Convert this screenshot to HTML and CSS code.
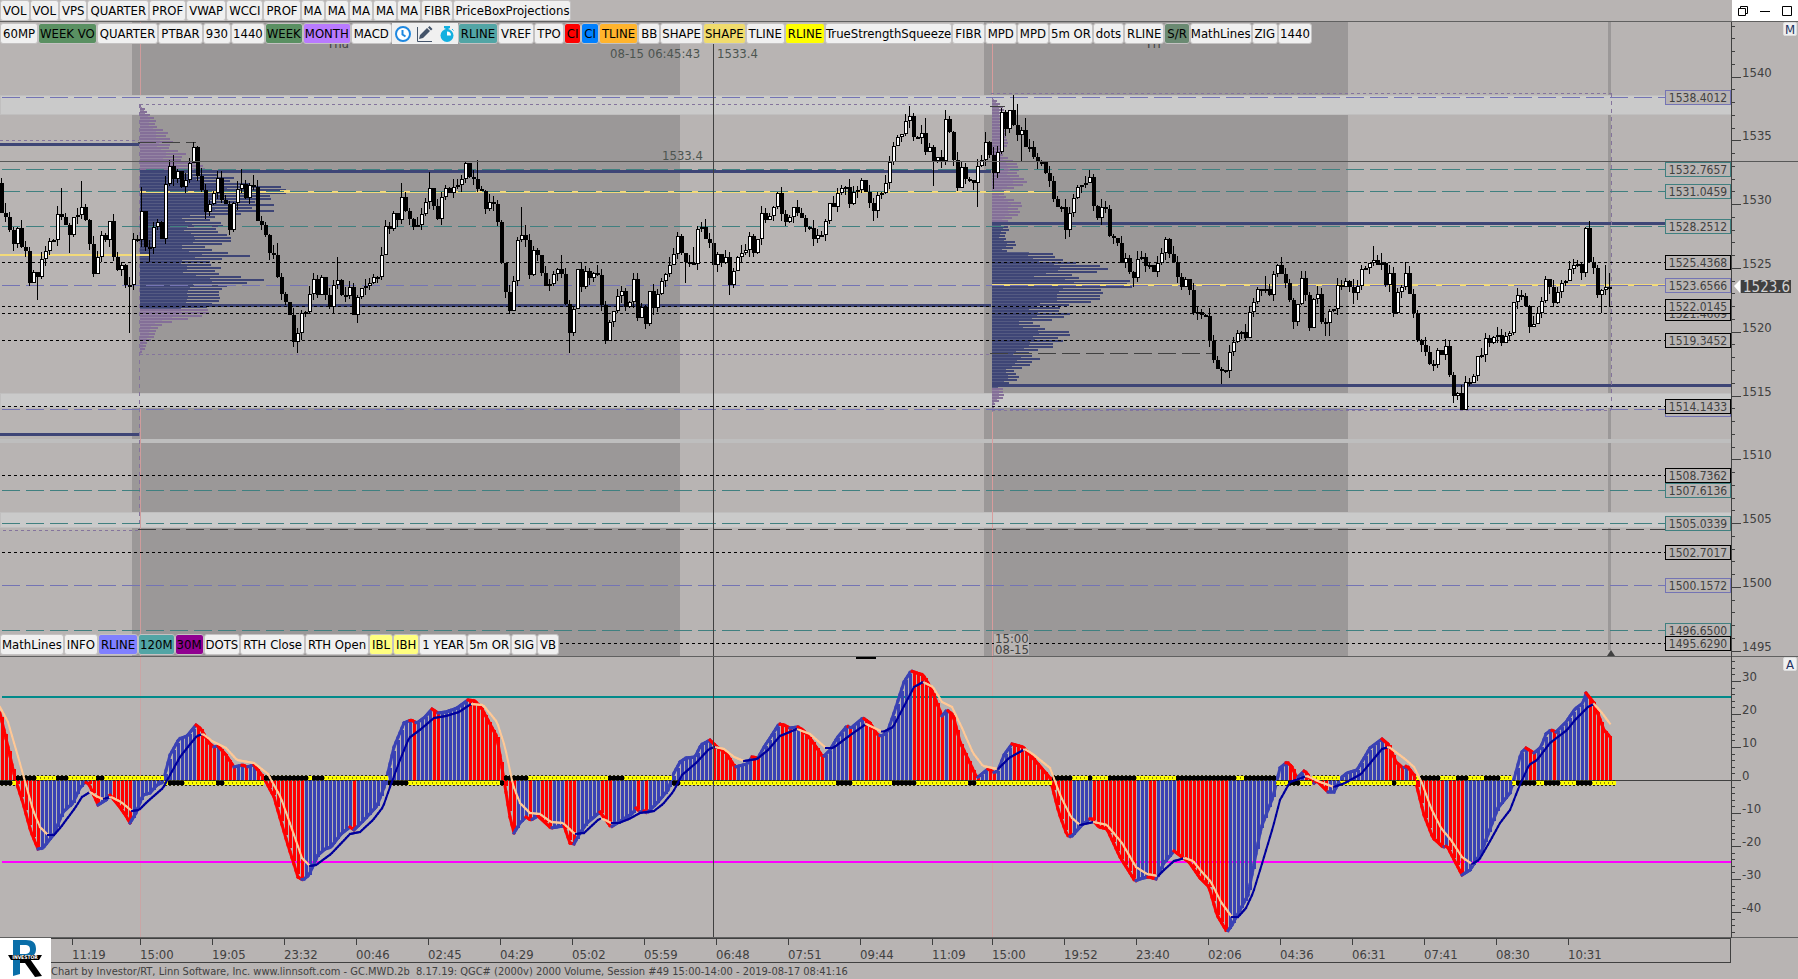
FILE: index.html
```
<!DOCTYPE html>
<html lang="en">
  <head>
    <meta charset="UTF-8" />
    <meta name="viewport" content="width=device-width, initial-scale=1.0" />
    <title>GC.MWD.2b - Investor/RT</title>
    <link rel="stylesheet" href="styles.css">
  </head>
  <body>
    <!-- Top toolbar -->
    <header class="topbar">
      <div class="toolbar">
        <button>VOL</button><button>VOL</button><button>VPS</button><button>QUARTER</button><button>PROF</button><button>VWAP</button><button>WCCI</button><button>PROF</button><button>MA</button><button>MA</button><button>MA</button><button>MA</button><button>MA</button><button>FIBR</button><button class="snug">PriceBoxProjections</button>
      </div>
      <div class="window-controls">
        <button aria-label="Restore">
          <svg width="12" height="12"><path d="M3.5 3V1.5h7v7H9M1.5 3.5h7v7h-7z" /></svg>
        </button>
        <button aria-label="Minimize">
          <svg width="12" height="12"><path d="M1 6.5h10" /></svg>
        </button>
        <button aria-label="Maximize">
          <svg width="12" height="12"><path d="M1.5 1.5h9v9h-9z" /></svg>
        </button>
      </div>
    </header>

    <!-- Price chart -->
    <main class="panel">
      <div class="toolbar overlay-top">
        <button>60MP</button><button class="green snug">WEEK VO</button><button>QUARTER</button><button>PTBAR</button><button>930</button><button class="snug">1440</button><button class="green snug">WEEK</button><button class="violet snug">MONTH</button><button>MACD</button>
        <button class="icon" aria-label="Clock">
          <svg width="16" height="16"><circle cx="8" cy="8" r="7" fill="#fff" stroke="#1e88e0" stroke-width="2" /><path d="M7.5 4v4.500l3 2" fill="none" stroke="#1e88e0" stroke-width="2" /></svg>
        </button>
        <button class="icon" aria-label="Draw">
          <svg width="16" height="16"><path d="M.5 1v14.500H15" fill="none" stroke="#44546a" /><path d="M2 13l1-4 7-7 3 3-7 7zM11 1.500l1.500-1.500 3 3L14 4.500z" fill="#44546a" /></svg>
        </button>
        <button class="icon" aria-label="Timer">
          <svg width="16" height="16"><circle cx="8" cy="9.500" r="6.500" fill="#12b0e0" /><path d="M5.500 0h5v2h-5zM7 1h2v3H7zM13 3l1.500 1.500" fill="#12b0e0" stroke="#12b0e0" /><path d="M8 9.500V5.500a4 4 0 0 1 4 4z" fill="#fff" /></svg>
        </button>
        <button class="teal">RLINE</button><button>VREF</button><button>TPO</button><button class="red">CI</button><button class="blue">CI</button><button class="orange">TLINE</button><button>BB</button><button class="snug">SHAPE</button><button class="sand snug">SHAPE</button><button>TLINE</button><button class="yellow">RLINE</button><button class="tight">TrueStrengthSqueeze</button><button>FIBR</button><button>MPD</button><button>MPD</button><button class="snug">5m OR</button><button>dots</button><button>RLINE</button><button class="moss">S/R</button><button class="tight">MathLines</button><button>ZIG</button><button class="snug">1440</button>
      </div>
      <svg id="priceChart" class="price-chart"></svg>
      <div class="toolbar overlay-bottom">
        <button class="snug">MathLines</button><button>INFO</button><button class="periwinkle">RLINE</button><button class="teal snug">120M</button><button class="purple snug">30M</button><button class="snug">DOTS</button><button>RTH Close</button><button>RTH Open</button><button class="lemon">IBL</button><button class="lemon">IBH</button><button>1 YEAR</button><button class="snug">5m OR</button><button>SIG</button><button>VB</button>
      </div>
    </main>
    <aside class="scale">
      <button class="mode">M</button>
      <svg id="priceScale" class="price-chart"></svg>
    </aside>

    <!-- True strength oscillator -->
    <section class="panel">
      <svg id="oscChart" class="osc-chart"></svg>
    </section>
    <aside class="scale">
      <button class="mode">A</button>
      <svg id="oscScale" class="osc-chart"></svg>
    </aside>

    <!-- Time axis and status line -->
    <footer class="bottom">
      <div class="logo">
        <svg width="51" height="40" viewBox="0 0 51 40">
          <path d="M13 2h13c7 0 10 3 10 9 0 5-3 8-7 9H20v16l-7 2zM20 7v9h5c3 0 5-1 5-4.500S28 7 25 7z" fill="#0a6ea8" fill-rule="evenodd" />
          <path d="M20 21h10l12 17-7 1L25 25h-5z" fill="#000" />
          <path d="M8 17h34l-3 5H11z" fill="#000" />
          <text x="25" y="21" class="logo-text">INVESTOR</text>
        </svg>
      </div>
      <svg id="timeAxis" class="time-axis"></svg>
      <p class="status">Chart by Investor/RT, Linn Software, Inc. www.linnsoft.com - GC.MWD.2b&nbsp; 8.17.19: QGC# (2000v) 2000 Volume, Session #49 15:00-14:00 - 2019-08-17 08:41:16</p>
    </footer>

    <script src="script.js"></script>
  </body>
</html>
```
FILE: styles.css
```
* {
  box-sizing: border-box;
}
body {
  margin: 0;
  min-height: 100vh;
  background: #b8b4b3;
  color: #404040;
  font-family: "DejaVu Sans Condensed", "DejaVu Sans", sans-serif;
  font-size: 13px;
  display: grid;
  grid-template-columns: 1fr 67px;
  grid-template-rows: auto auto auto 1fr;
}
button {
  font: inherit;
  color: #000;
  margin: 0;
  cursor: pointer;
}
svg {
  display: block;
}

/* toolbars */
.topbar {
  grid-column: 1 / -1;
  display: flex;
  justify-content: space-between;
  height: 22px;
  border-bottom: 1px solid #606060;
}
.toolbar {
  display: flex;
}
.toolbar button {
  height: 21px;
  padding: 0 2px;
  border: 1px solid #c4c2c2;
  border-radius: 3px;
  background: #f0f0f0;
  line-height: 18px;
  white-space: nowrap;
}
.toolbar .snug {
  padding: 0 1px;
}
.toolbar .tight {
  padding: 0;
}
.toolbar .icon {
  width: 22px;
  padding: 0 2px;
  border-color: #f0f0f0;
  border-radius: 0;
}
.toolbar .green { background: #5a9062; }
.toolbar .violet { background: #b97aff; }
.toolbar .teal { background: #52a5a5; }
.toolbar .red { background: #ff0000; }
.toolbar .blue { background: #0080ff; }
.toolbar .orange { background: #ffb42d; }
.toolbar .sand { background: #f0dc6c; }
.toolbar .yellow { background: #ffff00; }
.toolbar .moss { background: #6a8a72; }
.toolbar .periwinkle { background: #8080ff; }
.toolbar .purple { background: #900090; }
.toolbar .lemon { background: #ffff80; }
.window-controls {
  display: flex;
  width: 66px;
  height: 21px;
  background: #fff;
}
.window-controls button {
  flex: 1;
  padding: 0 5px;
  border: 0;
  background: none;
}
.window-controls path {
  fill: none;
  stroke: #000;
}

/* chart panels */
.panel {
  position: relative;
  min-width: 0;
}
.overlay-top {
  position: absolute;
  top: 1px;
  left: 0;
}
.overlay-bottom {
  position: absolute;
  bottom: 2px;
  left: 0;
}
.price-chart,
.osc-chart {
  width: 100%;
  height: 635px;
  border-bottom: 1px solid #606060;
}
.osc-chart {
  height: 281px;
}
.scale {
  position: relative;
  border-left: 1px solid #404040;
}
.mode {
  position: absolute;
  top: 0;
  right: 1px;
  width: 14px;
  height: 14px;
  padding: 0;
  border: 1px solid #dcdcdc;
  border-radius: 2px;
  background: #f0f0f0;
  line-height: 11px;
  color: #203060;
}

/* bottom */
.bottom {
  grid-column: 1 / -1;
  display: grid;
  grid-template-columns: 51px 1fr 67px;
  grid-template-rows: 25px 16px;
  align-content: start;
}
.logo {
  grid-row: 1 / 3;
  background: #fff;
}
.logo-text {
  font-size: 5px;
  font-weight: bold;
  text-anchor: middle;
}
.time-axis {
  width: 100%;
  height: 25px;
  border: solid #404040;
  border-width: 1px 1px 1px 0;
}
.status {
  grid-column: 2 / -1;
  margin: 0;
  padding-top: 1px;
  font-size: 11px;
  line-height: 16px;
  white-space: nowrap;
}

/* svg text */
svg text {
  fill: #404040;
}
.tag-text {
  font-size: 12px;
}
.last-price {
  font-size: 15px;
}
svg .logo-text {
  fill: #fff;
}
svg .last-price {
  fill: #d0d0d0;
}
svg .cursor-text {
  fill: #4c5450;
}
```
FILE: script.js
```
const NS = "http://www.w3.org/2000/svg";
const PRICE_TOP = 22;
const OSC_TOP = 657;
const BAR = 4;

function add(parent, tag, attrs, text) {
  const el = document.createElementNS(NS, tag);
  for (const key in attrs) el.setAttribute(key, attrs[key]);
  if (text !== undefined) el.textContent = text;
  parent.appendChild(el);
  return el;
}

// every chart group uses window coordinates
function layer(id, dx, dy) {
  return add(document.getElementById(id), "g", { transform: `translate(${dx},${dy})` });
}

function rect(g, x, y, w, h, fill) {
  return add(g, "rect", { x, y, width: w, height: h, fill });
}

function line(g, x1, y, x2, stroke, dash, width) {
  add(g, "line", {
    x1, x2, y1: y, y2: y, stroke,
    "stroke-width": width || 1,
    "stroke-dasharray": dash || "none",
    "shape-rendering": "crispEdges",
  });
}

function vline(g, x, y1, y2, stroke, dash) {
  add(g, "line", { x1: x + 0.5, x2: x + 0.5, y1, y2, stroke, "stroke-dasharray": dash || "none" });
}

const priceY = (p) => Math.round(76.6 + (1540 - p) * 12.756);

const levels = [
  [1538.4012, "blue"], [1532.7657, "teal"], [1531.0459, "teal"], [1528.2512, "teal"],
  [1525.4368, "black"], [1523.6566, "blue"], [1521.4609, "black"], [1522.0145, "black"],
  [1519.3452, "black"], [1513.93, "blue"], [1514.1433, "black"], [1508.7362, "black"],
  [1507.6136, "teal"], [1505.0339, "teal"], [1502.7017, "black"], [1500.1572, "blue"],
  [1496.65, "teal"], [1495.629, "black"],
];
const levelColor = { blue: "#7474b4", teal: "#408080", black: "#000" };

// closes, one per 2000v bar, in thirds of a pixel
const closes = [
  640, 652, 690, 732, 685, 740, 752, 848, 815, 832, 776, 752, 722, 720, 642, 652, 676, 704, 650, 645,
  622, 660, 732, 822, 770, 705, 720, 662, 772, 810, 795, 856, 856, 718, 720, 633, 742, 745, 680, 665,
  716, 552, 498, 536, 512, 562, 540, 488, 440, 528, 570, 636, 612, 578, 533, 600, 612, 690, 610, 568,
  552, 594, 556, 560, 662, 675, 705, 760, 764, 832, 882, 905, 945, 1026, 1000, 940, 935, 882, 838, 885,
  832, 885, 920, 855, 840, 885, 888, 862, 945, 892, 865, 858, 850, 832, 832, 766, 678, 688, 640, 660,
  592, 632, 656, 682, 675, 642, 606, 565, 618, 658, 592, 565, 580, 562, 556, 538, 488, 532, 536, 568,
  573, 626, 606, 612, 666, 790, 876, 932, 843, 720, 706, 720, 826, 750, 765, 818, 858, 852, 822, 806,
  822, 912, 1000, 928, 808, 862, 812, 835, 820, 826,
  915, 1024, 965, 932, 888, 873, 922, 905, 838, 955, 920, 972, 873, 925, 882, 843, 822, 795, 762, 708,
  758, 785, 790, 792, 688, 682, 716, 728, 795, 762, 790, 772, 855, 812, 772, 758, 750, 708, 760, 718,
  638, 660, 648, 620, 578, 642, 665, 652, 620, 640, 655, 680, 684, 716, 706, 706, 662, 610, 620, 578,
  565, 560, 612, 575, 570, 540, 575, 608, 632, 585, 578, 548, 485, 438, 412, 402, 362, 348, 412, 415,
  400, 455, 440, 482, 472, 484, 358, 395, 480, 564, 502, 538, 540, 548, 498, 480, 426, 465, 520, 455,
  336, 388, 330, 375, 405, 390, 440, 440, 470, 485, 487, 520, 542, 597, 622, 622, 690, 638, 595, 560,
  555, 550, 532, 618, 655, 622, 628, 708, 715, 730, 790, 775, 815, 833, 778, 772, 798, 796, 815, 790,
  760, 717, 762, 787, 830, 862, 838, 870, 940, 935,
  945, 948, 1024, 1080, 1108, 1110, 1112, 1056, 1025, 1000, 996, 1014, 935, 905, 866, 867, 868, 885,
  822, 795, 822, 850, 900, 965, 912, 835, 885, 983, 897, 882, 966, 968, 932, 928, 856, 860, 843, 862,
  880, 858, 808, 805, 790, 780, 795, 790, 856, 818, 940, 876, 862, 820, 883, 940, 1020, 1035, 1055,
  1092, 1094, 1050, 1066, 1038, 1125, 1188, 1178, 1229, 1147, 1150, 1128, 1068, 1064, 1015, 1028, 1010,
  1004, 1028, 1008, 1000, 905, 886, 888, 918, 980, 972, 940, 902, 838, 862, 910, 876, 850, 842, 808,
  796, 792, 818, 684, 787, 805, 884, 870, 860, 862,
];

// bars whose wick runs well past the body
const highs = {
  0: 535, 1: 610, 15: 565, 20: 543, 35: 560, 43: 465, 48: 427, 54: 512, 60: 508, 63: 525, 69: 730,
  84: 770, 100: 548, 107: 515, 119: 480, 130: 620, 131: 675, 140: 765, 158: 820, 169: 695, 173: 742,
  175: 665, 194: 575, 227: 318, 231: 355, 236: 330, 246: 395, 253: 285, 254: 312, 256: 355, 272: 510,
  291: 712, 316: 828, 326: 812, 343: 738, 345: 758, 351: 786, 386: 828, 396: 680, 401: 795, 402: 820,
};
const lows = {
  9: 900, 17: 758, 32: 1000, 37: 785, 74: 1058, 89: 970, 142: 1058, 171: 848, 182: 885, 218: 662,
  233: 557, 244: 620, 248: 566, 255: 483, 266: 716, 283: 862, 305: 1151, 331: 1007, 332: 1008,
  338: 912, 365: 1230, 366: 1230, 383: 982, 400: 940, 402: 922,
};

// volume profiles, [y in thirds of a pixel, right edge]
const profiles = [
  {
    x: 140, valueTop: 171, valueBottom: 306,
    rows: [
      [315, 140], [325, 145], [340, 149], [355, 156], [375, 155], [395, 168], [410, 165], [418, 174],
      [440, 168], [452, 180], [460, 187], [475, 178], [490, 201], [510, 207], [520, 214], [533, 238],
      [540, 230], [548, 245], [555, 279], [565, 285], [575, 289], [582, 268], [592, 275], [602, 253],
      [612, 274], [622, 249], [630, 274], [640, 237], [650, 209], [660, 210], [670, 228], [680, 218],
      [690, 214], [700, 226], [713, 232], [725, 230], [738, 205], [750, 214], [765, 250], [778, 210],
      [790, 209], [803, 223], [815, 210], [825, 233], [840, 272], [850, 230], [860, 224], [875, 218],
      [890, 220], [905, 218], [912, 207], [937, 209], [948, 199], [955, 186], [965, 168], [975, 159],
      [990, 156], [1010, 154], [1020, 149], [1030, 145], [1040, 146], [1050, 143], [1060, 140],
    ],
  },
  {
    x: 992, valueTop: 223, valueBottom: 386,
    rows: [
      [290, 993], [305, 999], [320, 1004], [360, 1003], [430, 1008], [445, 1004], [460, 1002],
      [470, 1008], [490, 1017], [510, 1019], [520, 1016], [535, 1025], [548, 1029], [555, 1019],
      [570, 1006], [585, 1003], [600, 1017], [612, 1024], [625, 1017], [637, 1021], [650, 1013],
      [665, 1005], [685, 1010], [700, 1005], [712, 1004], [725, 1017], [738, 1015], [750, 1007],
      [756, 1053], [765, 1052], [775, 1061], [785, 1073], [793, 1098], [805, 1109], [815, 1094],
      [827, 1057], [840, 1130], [850, 1127], [858, 1132], [868, 1097], [873, 1104], [887, 1099],
      [900, 1101], [910, 1069], [918, 1067], [925, 1050], [937, 1071], [945, 1067], [955, 1057],
      [965, 1032], [975, 1040], [985, 1046], [990, 1068], [1002, 1070], [1010, 1057], [1018, 1065],
      [1028, 1053], [1040, 1053], [1048, 1036], [1060, 1025], [1072, 1042], [1082, 1032],
      [1094, 1030], [1104, 1018], [1112, 1013], [1130, 1020], [1140, 1015], [1152, 1002],
      [1165, 1003], [1185, 1004], [1195, 1002], [1205, 995], [1230, 993],
    ],
  },
];

// linear value between key points
function at(points, x) {
  for (let i = 1; i < points.length; i++) {
    if (x <= points[i][0]) {
      const [x0, y0] = points[i - 1];
      const [x1, y1] = points[i];
      return y0 + ((y1 - y0) * (x - x0)) / (x1 - x0);
    }
  }
  return points[points.length - 1][1];
}

function drawPriceChart() {
  const g = layer("priceChart", 0, -PRICE_TOP);

  // overnight sessions
  rect(g, 132, 22, 548, 634, "#9b9898");
  rect(g, 984, 22, 364, 634, "#9b9898");
  rect(g, 1608, 22, 3, 628, "#9b9898");
  [[95, 20], [393, 15], [512, 16]].forEach(([y, h]) => {
    rect(g, 0, y, "100%", h, "#c0bfbf");
    rect(g, 1, y + 1, "100%", h - 2, "#cacaca");
  });
  rect(g, 0, 439, "100%", 4, "#bebebe");
  vline(g, 140, 22, 95, "#cf9c9c");
  vline(g, 140, 409, 656, "#cf9c9c");
  vline(g, 992, 22, 95, "#d89c9c");
  vline(g, 992, 411, 656, "#d89c9c");
  add(g, "text", { x: 327, y: 48 }, "Thu");
  add(g, "text", { x: 1147, y: 48 }, "Fri");

  profiles.forEach((p) => {
    for (let y = Math.round(p.rows[0][0] / 3); y < p.rows[p.rows.length - 1][0] / 3; y += 3) {
      const inValue = y >= p.valueTop && y <= p.valueBottom;
      const color = inValue ? "#3e4576" : "#846f98";
      rect(g, p.x, y, Math.max(1, Math.round(at(p.rows, y * 3) - p.x)), 2, color);
      rect(g, p.x, y + 2, Math.max(1, Math.round((at(p.rows, y * 3 + 6) - p.x) * 0.6)), 1, inValue ? "#545a82" : "#9484a2");
    }
  });

  // value areas and points of control
  const navy = "#3e4576";
  const gold = "#f2da7a";
  line(g, 0, 144.5, 140, navy, "", 3);
  line(g, 0, 434.5, 140, navy, "", 3);
  line(g, 140, 171.5, 991, navy, "", 3);
  line(g, 140, 305.5, 991, navy, "", 3);
  line(g, 992, 223.5, "100%", navy, "", 3);
  line(g, 992, 385.5, "100%", navy, "", 3);
  line(g, 0, 255, 150, gold, "", 2);
  line(g, 140, 192, 1053, gold, "", 2);
  rect(g, 280, 190, 10, 3, gold);
  line(g, 992, 285, "100%", gold, "", 2);

  const violet = "#84749c";
  line(g, 0, 140.5, 139, violet, "3 3");
  line(g, 140, 104.5, 991, violet, "3 3");
  line(g, 140, 354.5, 991, violet, "3 3");
  line(g, 991, 93.5, 1611, violet, "3 3");
  line(g, 992, 410.5, 1611, violet, "3 3");
  line(g, 3, 530.5, 138, violet, "3 3");
  vline(g, 139, 104, 530, violet, "4 4");
  vline(g, 1611, 93, 410, violet, "4 4");
  const dark = "#404040";
  line(g, 138, 142.5, 196, dark, "18 6");
  line(g, 990, 106.5, 1005, dark);
  line(g, 990, 353.5, 1213, dark, "18 6");
  line(g, 138, 529.5, "100%", dark, "18 6");

  levels.forEach(([price, kind]) => {
    line(g, 2, priceY(price) + 0.5, "100%", levelColor[kind], kind === "black" ? "3 3" : "18 6");
  });

  // candles
  let open = 548 / 3;
  closes.forEach((c, i) => {
    const close = c / 3;
    const x = i * BAR;
    const top = Math.round(Math.min(open, close));
    const bottom = Math.round(Math.max(open, close));
    const height = Math.max(2, bottom - top);
    const high = highs[i] ? highs[i] / 3 : top - ((i * 7) % 9);
    const low = lows[i] ? lows[i] / 3 : bottom + ((i * 5) % 8);
    rect(g, x + 1, Math.round(high), 1, Math.round(low - high), "#000");
    rect(g, x, top, BAR, height, "#000");
    if (close < open && height > 2) rect(g, x + 1, top + 1, 2, height - 2, "#fff");
    open = close;
  });

  // crosshair
  line(g, 0, 161.5, "100%", "#585858");
  vline(g, 713, 22, 656, "#404040");
  add(g, "text", { x: 610, y: 58, class: "cursor-text" }, "08-15 06:45:43");
  add(g, "text", { x: 717, y: 58, class: "cursor-text" }, "1533.4");
  add(g, "text", { x: 662, y: 160, class: "cursor-text" }, "1533.4");

  rect(g, 994, 634, 35, 11, "#b8b4b3");
  rect(g, 994, 645, 35, 10, "#b8b4b3");
  add(g, "text", { x: 995, y: 643 }, "15:00");
  add(g, "text", { x: 995, y: 654 }, "08-15");
  add(g, "path", { d: "M1607 656l4-6 4 6z", fill: "#404040" });

  // price tags hang on the right edge
  const tags = add(g, "svg", { x: "100%", overflow: "visible" });
  levels.forEach(([price, kind]) => {
    const y = priceY(price);
    add(tags, "rect", { x: -65.5, y: y - 6.5, width: 65, height: 14, fill: "#b8b4b3", stroke: levelColor[kind] });
    add(tags, "text", { x: -33, y: y + 5, "text-anchor": "middle", class: "tag-text" }, price.toFixed(4));
  });
}

function drawPriceScale() {
  const g = layer("priceScale", 0, -PRICE_TOP);
  for (let p = 1495; p <= 1544; p++) {
    const major = p % 5 === 0;
    line(g, 0, priceY(p) + 0.5, major ? 9 : 3, "#404040");
    if (major) add(g, "text", { x: 10, y: priceY(p) }, p);
  }
  line(g, 0, 161.5, "100%", "#585858");
  add(g, "path", { d: "M2 286l6-6v13z", fill: "#fff" });
  rect(g, 9, 280, 50, 13, "#404040");
  add(g, "text", { x: 11, y: 292, class: "last-price" }, "1523.6");
}

// oscillator and its signal line, window coordinates
const tss = [
  [0, 713], [8, 747], [15, 778], [23, 803], [31, 832], [38, 849], [43, 848], [54, 834], [63, 812],
  [73, 803], [80, 788], [85, 782], [89, 784], [98, 805], [106, 800], [110, 795], [119, 806],
  [126, 816], [130, 823], [136, 813], [143, 795], [150, 793], [157, 785], [163, 782], [170, 755],
  [179, 739], [187, 736], [196, 725], [201, 729], [209, 743], [214, 747], [218, 746], [226, 755],
  [234, 767], [243, 765], [247, 767], [254, 765], [264, 778], [274, 797], [287, 842], [298, 877],
  [303, 880], [309, 875], [318, 855], [325, 849], [331, 847], [341, 834], [350, 827], [354, 830],
  [364, 820], [377, 806], [385, 785], [394, 747], [404, 723], [411, 720], [417, 723], [425, 717],
  [432, 709], [438, 713], [446, 712], [457, 708], [468, 700], [475, 701], [482, 709], [497, 737],
  [504, 780], [510, 817], [514, 833], [520, 823], [526, 817], [531, 820], [538, 816], [551, 828],
  [557, 827], [564, 826], [570, 843], [574, 844], [580, 833], [587, 823], [600, 812], [611, 827],
  [619, 822], [633, 813], [636, 808], [640, 812], [644, 811], [647, 813], [657, 803], [668, 790],
  [674, 773], [680, 762], [686, 758], [695, 757], [701, 745], [710, 740], [717, 747], [726, 753],
  [735, 767], [747, 764], [752, 757], [758, 758], [764, 747], [770, 738], [779, 724], [784, 725],
  [790, 728], [798, 727], [803, 730], [812, 741], [823, 757], [830, 750], [837, 738], [847, 726],
  [851, 728], [863, 718], [870, 723], [877, 734], [881, 736], [887, 733], [895, 710], [904, 682],
  [911, 671], [923, 675], [931, 688], [942, 716], [947, 710], [953, 715], [960, 742], [977, 778],
  [983, 773], [988, 769], [995, 773], [999, 768], [1004, 755], [1012, 744], [1023, 747], [1032, 757],
  [1050, 778], [1059, 813], [1067, 835], [1071, 837], [1082, 825], [1091, 818], [1099, 827],
  [1107, 829], [1120, 857], [1135, 881], [1143, 878], [1149, 877], [1156, 879], [1164, 863],
  [1174, 851], [1182, 857], [1189, 862], [1200, 878], [1209, 887], [1217, 915], [1227, 932],
  [1232, 925], [1248, 895], [1261, 828], [1273, 797], [1280, 768], [1287, 762], [1292, 767],
  [1297, 778], [1304, 771], [1307, 773], [1313, 784], [1317, 781], [1328, 792], [1334, 792],
  [1341, 778], [1347, 773], [1357, 770], [1370, 748], [1382, 739], [1389, 745], [1396, 762],
  [1403, 768], [1407, 766], [1414, 775], [1424, 815], [1433, 838], [1443, 847], [1447, 846],
  [1462, 875], [1470, 870], [1481, 853], [1498, 808], [1510, 793], [1516, 772], [1521, 753],
  [1526, 748], [1534, 753], [1541, 747], [1546, 734], [1551, 730], [1556, 732], [1566, 722],
  [1575, 709], [1583, 703], [1586, 693], [1594, 703], [1604, 730], [1611, 738],
];
const signal = [
  [0, 707], [8, 722], [19, 760], [33, 810], [40, 827], [48, 835], [54, 835], [61, 827], [75, 808],
  [82, 797], [90, 792], [96, 796], [103, 799], [111, 797], [121, 802], [132, 811], [139, 810],
  [147, 802], [163, 788], [170, 775], [180, 757], [191, 743], [197, 736], [203, 734], [212, 741],
  [226, 748], [237, 760], [254, 763], [268, 774], [281, 798], [293, 832], [302, 858], [310, 866],
  [316, 865], [331, 854], [350, 834], [360, 832], [373, 820], [383, 807], [390, 787], [400, 760],
  [409, 738], [421, 729], [434, 718], [446, 716], [459, 712], [471, 704], [483, 705], [497, 722],
  [505, 747], [513, 785], [520, 803], [530, 813], [540, 814], [551, 822], [563, 823], [575, 834],
  [584, 833], [599, 819], [603, 819], [611, 823], [619, 823], [629, 819], [640, 813], [654, 811],
  [663, 804], [673, 792], [682, 775], [696, 763], [709, 749], [715, 747], [724, 749], [734, 757],
  [744, 761], [757, 759], [768, 750], [780, 736], [797, 729], [810, 734], [826, 748], [833, 748],
  [849, 736], [866, 724], [883, 732], [893, 727], [902, 710], [914, 687], [923, 682], [933, 687],
  [942, 702], [952, 707], [962, 728], [973, 753], [983, 766], [998, 769], [1009, 758], [1025, 749],
  [1034, 755], [1050, 768], [1061, 797], [1071, 817], [1080, 825], [1094, 822], [1107, 825],
  [1122, 843], [1136, 867], [1147, 874], [1158, 876], [1164, 870], [1174, 861], [1185, 858],
  [1193, 861], [1202, 872], [1211, 882], [1221, 902], [1232, 917], [1238, 917], [1246, 908],
  [1253, 893], [1261, 867], [1273, 827], [1280, 800], [1290, 782], [1307, 776], [1320, 782],
  [1334, 787], [1345, 783], [1361, 774], [1382, 749], [1389, 747], [1405, 759], [1414, 767],
  [1422, 783], [1431, 808], [1441, 828], [1451, 840], [1462, 857], [1472, 864], [1479, 860],
  [1489, 843], [1500, 823], [1510, 810], [1519, 787], [1529, 765], [1537, 760], [1550, 743],
  [1567, 730], [1575, 720], [1588, 707], [1594, 704], [1602, 713], [1611, 725],
];
const squeeze = [
  [0, 12], [16, 34], [58, 66], [98, 102], [170, 183], [216, 222], [266, 306], [311, 322], [387, 407],
  [500, 527], [607, 622], [673, 681], [835, 851], [891, 914], [967, 975], [1052, 1071],
  [1087, 1090], [1107, 1134], [1178, 1202], [1206, 1235], [1243, 1277], [1290, 1299], [1391, 1395],
  [1419, 1439], [1458, 1466], [1483, 1499], [1515, 1535], [1546, 1558], [1575, 1590],
];

function slopeLine(g, points, up, down, width) {
  for (let x = 0; x < 1610; x += 2) {
    const y1 = at(points, x);
    const y2 = at(points, x + 2);
    add(g, "line", { x1: x, y1, x2: x + 2, y2, stroke: y2 > y1 ? down : up, "stroke-width": width, "stroke-linecap": "square" });
  }
}

function drawOscillator() {
  const g = layer("oscChart", 0, -OSC_TOP);
  const zero = 780;
  vline(g, 140, 657, 937, "#c9a5a5");
  vline(g, 992, 657, 937, "#d0a3a3");
  line(g, 2, 697, "100%", "#008a8a", "", 2);
  line(g, 2, 862, "100%", "#ff00ff", "", 2);
  line(g, 0, zero + 0.5, "100%", "#404040");
  rect(g, 856, 657, 20, 2, "#000");

  for (let x = 1; x <= 1610; x += BAR) {
    const y = Math.round(at(tss, x));
    const color = at(tss, x + 1) > at(tss, x - 1) ? "#ff0000" : "#3a42b4";
    rect(g, x, Math.min(y, zero), 3, Math.abs(y - zero), color);
  }
  slopeLine(g, tss, "#3a42b4", "#ff0000", 3);

  // squeeze dots, on the side of zero away from the bars
  for (let x = 2; x <= 1614; x += BAR) {
    const tight = squeeze.some(([a, b]) => x >= a && x <= b);
    const y = at(tss, x) > zero ? 775 : 780;
    rect(g, x - 2, y + 1, BAR, 4, tight ? "#000" : "#ffff00");
    rect(g, x - 1, y, 2, 1, "#2c2c10");
    rect(g, x - 1, y + 5, 2, 1, "#2c2c10");
    rect(g, x - 2, y + 2, 1, 2, tight ? "#000" : "#8a8410");
  }
  slopeLine(g, signal, "#00009c", "#ffc896", 2);
  vline(g, 713, 657, 937, "#404040");
}

function drawOscScale() {
  const g = layer("oscScale", 0, -OSC_TOP);
  for (let v = -46; v <= 36; v += 2) {
    const y = Math.round(780 - v * 3.3);
    line(g, 0, y + 0.5, v % 10 ? 3 : 9, "#404040");
    if (v % 10 === 0) add(g, "text", { x: 10, y }, v);
  }
}

function drawTimeAxis() {
  const g = layer("timeAxis", -51, 0);
  const times = [
    ["11:19", 72], ["15:00", 140], ["19:05", 212], ["23:32", 284], ["00:46", 356], ["02:45", 428],
    ["04:29", 500], ["05:02", 572], ["05:59", 644], ["06:48", 716], ["07:51", 788], ["09:44", 860],
    ["11:09", 932], ["15:00", 992], ["19:52", 1064], ["23:40", 1136], ["02:06", 1208],
    ["04:36", 1280], ["06:31", 1352], ["07:41", 1424], ["08:30", 1496], ["10:31", 1568],
  ];
  times.forEach(([label, x]) => {
    vline(g, x, 0, 6, "#404040");
    add(g, "text", { x, y: 20 }, label);
  });
}

drawPriceChart();
drawPriceScale();
drawOscillator();
drawOscScale();
drawTimeAxis();
```
